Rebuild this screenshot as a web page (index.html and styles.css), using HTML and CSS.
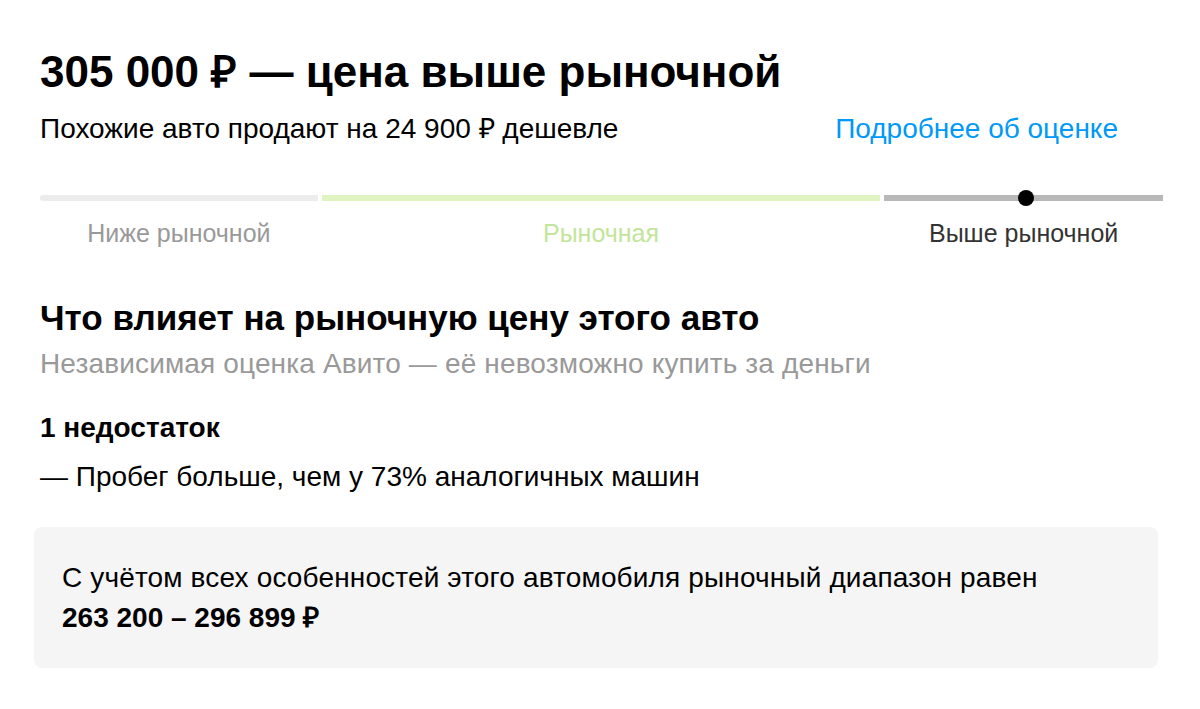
FILE: index.html
```html
<!DOCTYPE html>
<html lang="ru">
<head>
<meta charset="utf-8">
<link rel="stylesheet" href="styles.css">
</head>
<body>
<div class="page">
  <h1 class="title">305 000 ₽ — цена выше рыночной</h1>
  <div class="sub-row">
    <span class="sub">Похожие авто продают на 24 900 ₽ дешевле</span>
    <a class="link" href="#">Подробнее об оценке</a>
  </div>
  <div class="scale">
    <div class="seg seg-low">
      <div class="bar"></div>
      <div class="label">Ниже рыночной</div>
    </div>
    <div class="seg seg-mid">
      <div class="bar"></div>
      <div class="label">Рыночная</div>
    </div>
    <div class="seg seg-high">
      <div class="bar"><span class="dot"></span></div>
      <div class="label">Выше рыночной</div>
    </div>
  </div>
  <h2 class="h2">Что влияет на рыночную цену этого авто</h2>
  <p class="muted">Независимая оценка Авито — её невозможно купить за деньги</p>
  <h3 class="h3">1 недостаток</h3>
  <p class="item">— Пробег больше, чем у 73% аналогичных машин</p>
  <div class="box">
    <p class="box-text">С учётом всех особенностей этого автомобиля рыночный диапазон равен</p>
    <p class="box-range">263 200 – 296 899 ₽</p>
  </div>
</div>
</body>
</html>
```
FILE: styles.css
```css
* { box-sizing: border-box; }
body {
  margin: 0;
  background: #fff;
  font-family: "Liberation Sans", Arial, sans-serif;
  color: #000;
}
.page {
  padding: 47px 37px 0 40px;
  width: 1200px;
}
.title {
  margin: 0;
  font-size: 44px;
  font-weight: 700;
  line-height: 50px;
}
.sub-row {
  display: flex;
  justify-content: space-between;
  align-items: baseline;
  margin-top: 15px;
  padding-right: 45px;
}
.sub { font-size: 28px; line-height: 34px; }
.link {
  font-size: 28px;
  line-height: 34px;
  color: #0099f7;
  text-decoration: none;
}
.scale {
  display: flex;
  gap: 4px;
  margin-top: 49px;
}
.seg { display: flex; flex-direction: column; align-items: center; }
.seg-low { width: 278px; }
.seg-mid { width: 559px; }
.seg-high { width: 279px; }
.bar {
  position: relative;
  width: 100%;
  height: 6px;
}
.seg-low .bar { background: #ececec; border-radius: 3px 0 0 3px; }
.seg-mid .bar { background: #e0f4c2; }
.seg-high .bar { background: #b8b8b8; }
.dot {
  position: absolute;
  left: 134px;
  top: -5px;
  width: 16px;
  height: 16px;
  border-radius: 50%;
  background: #000;
}
.label {
  margin-top: 17px;
  font-size: 25px;
  line-height: 30px;
}
.seg-low .label { color: #999; }
.seg-mid .label { color: #c2e59a; }
.seg-high .label { color: #333; }
.h2 {
  margin: 49px 0 0;
  font-size: 35px;
  font-weight: 700;
  line-height: 42px;
}
.muted {
  margin: 8px 0 0;
  font-size: 28px;
  line-height: 34px;
  color: #999;
  letter-spacing: 0.15px;
}
.h3 {
  margin: 30px 0 0;
  font-size: 28px;
  font-weight: 700;
  line-height: 34px;
}
.item {
  margin: 15px 0 0;
  font-size: 28px;
  line-height: 34px;
}
.box {
  margin: 33px 0 0 -6px;
  width: 1124px;
  background: #f5f5f5;
  border-radius: 8px;
  padding: 31px 28px 30px;
}
.box-text {
  margin: 0;
  font-size: 28px;
  line-height: 40px;
  letter-spacing: 0.15px;
}
.box-range {
  margin: 0;
  font-size: 28px;
  font-weight: 700;
  line-height: 40px;
}
```
